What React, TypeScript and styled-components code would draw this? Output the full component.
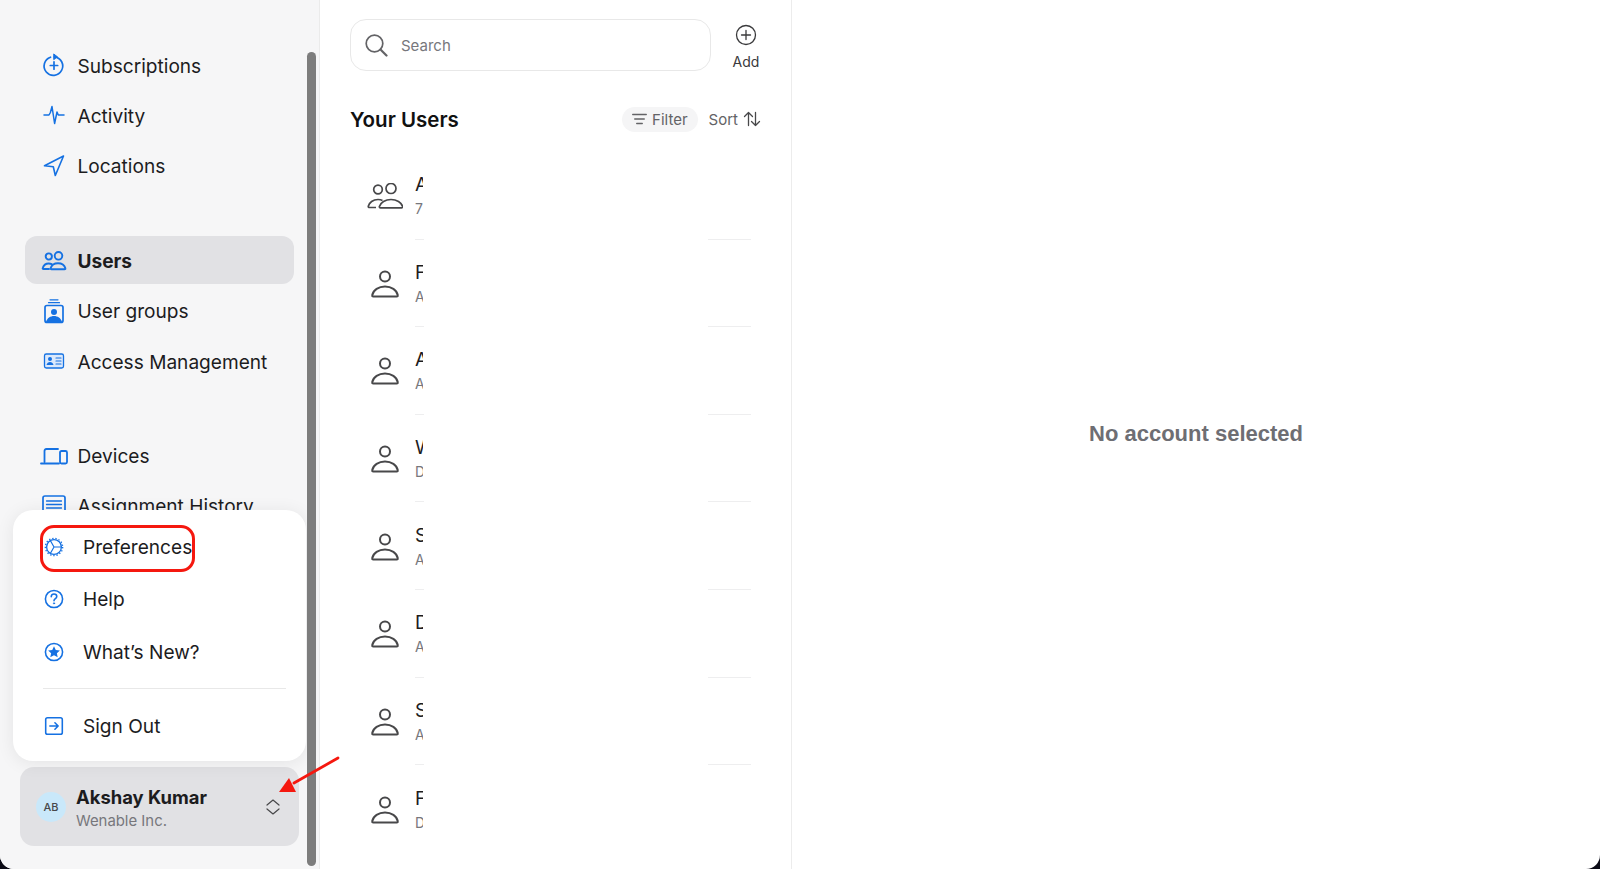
import React from 'react';
import styled, { createGlobalStyle } from 'styled-components';

const GlobalStyle = createGlobalStyle`
    html, body {
        margin: 0;
        padding: 0;
        background: #0b0b16;
    }
    body {
        font-family: Inter, "Noto Sans", sans-serif;
        -webkit-font-smoothing: antialiased;
    }
`

const Blue = ({ children }: { children: React.ReactNode }): JSX.Element => (
    <svg width="26" height="26" viewBox="0 0 26 26" fill="none" stroke="#1571e2" strokeWidth="1.7" strokeLinecap="round" strokeLinejoin="round">
        {children}
    </svg>
)

const SubscriptionsIcon = () => (
    <Blue>
        <path d="M9.5 5.2a9.3 9.3 0 1 0 4-.4" />
        <path d="M13 2.2l3.4 2.6-3.4 2.6z" fill="#1571e2" strokeWidth="1" />
        <path d="M13 9.8v7.4M9.3 13.5h7.4" />
    </Blue>
)
const ActivityIcon = () => (
    <Blue>
        <path d="M3 13h5l1.4-2.5L11 4.500l2.600 17 2.400-11.500 1.300 3H23" strokeWidth="1.5" />
    </Blue>
)
const LocationsIcon = () => (
    <Blue>
        <path d="M22.500 3L3.500 12.800l8.800 1 2 8.700z" strokeWidth="1.600" />
    </Blue>
)
const UsersIcon = () => (
    <Blue>
        <circle cx="7.800" cy="9.500" r="3.100" strokeWidth="1.900" />
        <circle cx="17.500" cy="8.800" r="3.800" strokeWidth="1.900" />
        <path d="M8 22H2.500c-.7 0-1-.5-.8-1 .8-2.500 3-4.500 6-4.500 1 0 2 .2 3 .7" strokeWidth="1.900" />
        <path d="M10.500 22.300c-.8 0-1.100-.5-.9-1.100.9-3 3.800-5 7.400-5s6.500 2 7.400 5c.2.600-.1 1.100-.9 1.100z" strokeWidth="1.900" />
    </Blue>
)
const UserGroupsIcon = () => (
    <Blue>
        <rect x="4" y="7.500" width="18" height="17" rx="2" />
        <path d="M7.500 4.700h11M9 1.800h8" strokeWidth="1.200" />
        <circle cx="13" cy="14" r="3" fill="#1571e2" stroke="none" />
        <path d="M5 24c1-4 4.500-6 8-6s7 2 8 6z" fill="#1571e2" stroke="none" />
    </Blue>
)
const AccessIcon = () => (
    <Blue>
        <rect x="3.500" y="6" width="19" height="14" rx="1.800" strokeWidth="1.300" fill="#dce9fb" />
        <circle cx="9" cy="11" r="2" fill="#1571e2" stroke="none" />
        <path d="M5.500 17c.4-2 2-3 3.500-3s3.100 1 3.500 3z" fill="#1571e2" stroke="none" />
        <path d="M15 10h5M15 13h5M15 16h5" strokeWidth="1.200" />
    </Blue>
)
const DevicesIcon = () => (
    <svg width="28" height="26" viewBox="0 0 28 26" fill="none" stroke="#1571e2" strokeWidth="1.800" strokeLinecap="round" strokeLinejoin="round">
        <path d="M18 6H6.500C5 6 4.500 7 4.500 8v11" />
        <path d="M1 20.500h18" />
        <rect x="20" y="8" width="7" height="12.500" rx="1.500" />
    </svg>
)
const HistoryIcon = () => (
    <Blue>
        <rect x="2" y="3" width="22" height="20" rx="2" />
        <path d="M5.500 8h15M5.500 11.500h15M5.500 15h15M5.500 18.500h10" strokeWidth="1.300" />
    </Blue>
)
const PreferencesIcon = () => (
    <Blue>
        <circle cx="13" cy="13" r="8" strokeWidth="1.400" />
        <circle cx="13" cy="13" r="9.400" strokeWidth="1.400" strokeDasharray="1.500 2" strokeLinecap="butt" />
        <path d="M9 6l4 7-4 7M13 13h8" strokeWidth="1.300" />
    </Blue>
)
const HelpIcon = () => (
    <Blue>
        <circle cx="13" cy="13" r="9.300" />
        <path d="M10 10.500c0-1.800 1.300-3 3-3s3 1.200 3 2.700c0 2.300-3 2.300-3 4.600" />
        <circle cx="13" cy="17.700" r=".7" fill="#1571e2" strokeWidth=".8" />
    </Blue>
)
const WhatsNewIcon = () => (
    <Blue>
        <circle cx="13" cy="13" r="9.300" />
        <path d="M13 6.700l1.900 4.100 4.500.5-3.300 3 .9 4.500-4-2.300-4 2.300.9-4.500-3.300-3 4.500-.5z" fill="#1571e2" stroke="none" />
    </Blue>
)
const SignOutIcon = () => (
    <Blue>
        <rect x="4" y="4" width="18" height="18" rx="2" />
        <path d="M8.500 13h9M14 9.500l3.500 3.500-3.500 3.500" />
    </Blue>
)
const SearchIcon = () => (
    <svg width="24" height="24" viewBox="0 0 24 24" fill="none" stroke="#636366" strokeWidth="1.700" strokeLinecap="round">
        <circle cx="10.500" cy="10.500" r="8.300" />
        <path d="M16.500 16.500l6 6" strokeWidth="2.200" />
    </svg>
)
const AddIcon = () => (
    <svg width="22" height="22" viewBox="0 0 22 22" fill="none" stroke="#3a3a3c" strokeWidth="1.300" strokeLinecap="round">
        <circle cx="11" cy="11" r="9.500" />
        <path d="M11 6.500v9M6.500 11h9" />
    </svg>
)
const FilterIcon = () => (
    <svg width="15" height="12" viewBox="0 0 15 12" fill="none" stroke="#636366" strokeWidth="1.300" strokeLinecap="round">
        <path d="M.7 1.500h13.600M2.700 6h9.600M4.700 10.500h5.600" />
    </svg>
)
const SortIcon = () => (
    <svg width="18" height="16" viewBox="0 0 18 16" fill="none" stroke="#48484a" strokeWidth="1.300" strokeLinecap="round" strokeLinejoin="round">
        <path d="M5.500 14.500V1.500M1.500 5.500l4-4 4 4" />
        <path d="M12.500 1.500v13M8.500 10.500l4 4 4-4" />
    </svg>
)
const PersonIcon = () => (
    <svg width="28" height="28" viewBox="0 0 28 28" fill="none" stroke="#48484a" strokeWidth="2" strokeLinejoin="round">
        <circle cx="14" cy="6.500" r="5" />
        <path d="M2.300 26.500c-.9 0-1.300-.5-1.100-1.300C2.300 20 7.600 16.500 14 16.500s11.700 3.500 12.800 8.700c.2.800-.2 1.300-1.100 1.300z" />
    </svg>
)
const PeopleIcon = () => (
    <svg width="36" height="26" viewBox="0 0 36 26" fill="none" stroke="#48484a" strokeWidth="1.700" strokeLinejoin="round">
        <circle cx="11" cy="6.500" r="4.300" />
        <circle cx="24" cy="5.500" r="5" />
        <path d="M9 24.500H2.500c-.9 0-1.400-.5-1.200-1.300.9-3.700 4.700-6.700 9.700-6.700 1.700 0 3.200.3 4.500 1" />
        <path d="M13.500 24.800c-.9 0-1.300-.6-1.100-1.300 1.100-4 6-7 11.600-7s10.500 3 11.600 7c.2.700-.2 1.300-1.100 1.300z" />
    </svg>
)
const ChevronsIcon = () => (
    <svg width="14" height="16" viewBox="0 0 14 16" fill="none" stroke="#48484a" strokeWidth="1.200" strokeLinecap="round" strokeLinejoin="round">
        <path d="M1 6l6-5 6 5M1 10l6 5 6-5" />
    </svg>
)

const navGroups = [
    [
        { label: 'Subscriptions', icon: <SubscriptionsIcon /> },
        { label: 'Activity', icon: <ActivityIcon /> },
        { label: 'Locations', icon: <LocationsIcon /> },
    ],
    [
        { label: 'Users', icon: <UsersIcon />, active: true },
        { label: 'User groups', icon: <UserGroupsIcon /> },
        { label: 'Access Management', icon: <AccessIcon /> },
    ],
    [
        { label: 'Devices', icon: <DevicesIcon /> },
        { label: 'Assignment History', icon: <HistoryIcon /> },
    ],
]

const users = [
    { name: 'A', sub: '7', group: true },
    { name: 'F', sub: 'A' },
    { name: 'A', sub: 'A' },
    { name: 'W', sub: 'D' },
    { name: 'S', sub: 'A' },
    { name: 'D', sub: 'A' },
    { name: 'S', sub: 'A' },
    { name: 'F', sub: 'D' },
]

const App = (): JSX.Element => {
    return (
        <Frame>
            <GlobalStyle />
            <Sidebar>
                <Nav>
                    {navGroups.map((group, i) => (
                        <NavGroup key={i}>
                            {group.map((item) => (
                                <NavItem key={item.label} $active={item.active}>
                                    <NavIcon>{item.icon}</NavIcon>
                                    <NavLabel>{item.label}</NavLabel>
                                </NavItem>
                            ))}
                        </NavGroup>
                    ))}
                </Nav>
                <AccountCard>
                    <Avatar>AB</Avatar>
                    <AccountText>
                        <AccountName>Akshay Kumar</AccountName>
                        <AccountOrg>Wenable Inc.</AccountOrg>
                    </AccountText>
                    <ChevronsIcon />
                </AccountCard>
                <Popup>
                    <RedBox />
                    <MenuItem><MenuIcon><PreferencesIcon /></MenuIcon>Preferences</MenuItem>
                    <MenuItem><MenuIcon><HelpIcon /></MenuIcon>Help</MenuItem>
                    <MenuItem><MenuIcon><WhatsNewIcon /></MenuIcon>What’s New?</MenuItem>
                    <MenuDivider />
                    <MenuItem><MenuIcon><SignOutIcon /></MenuIcon>Sign Out</MenuItem>
                </Popup>
                <ScrollThumb />
            </Sidebar>

            <ListPanel>
                <SearchRow>
                    <SearchBox>
                        <SearchIcon />
                        <SearchText>Search</SearchText>
                    </SearchBox>
                    <AddButton>
                        <AddIcon />
                        <span>Add</span>
                    </AddButton>
                </SearchRow>
                <ListHeader>
                    <ListTitle>Your Users</ListTitle>
                    <FilterPill><FilterIcon />Filter</FilterPill>
                    <SortButton>Sort<SortIcon /></SortButton>
                </ListHeader>
                <UserList>
                    {users.map((user, i) => (
                        <UserRow key={i}>
                            <UserBody>
                                <UserIconBox>{user.group ? <PeopleIcon /> : <PersonIcon />}</UserIconBox>
                                <UserClip>
                                    <UserName>{user.name}</UserName>
                                    <UserSub>{user.sub}</UserSub>
                                </UserClip>
                            </UserBody>
                            {i < users.length - 1 && (
                                <RowRule>
                                    <RuleSegment $width={9} />
                                    <RuleSegment $width={43} />
                                </RowRule>
                            )}
                        </UserRow>
                    ))}
                </UserList>
            </ListPanel>

            <DetailPanel>
                <EmptyText>No account selected</EmptyText>
            </DetailPanel>

            <RedArrow viewBox="0 0 70 50" width="70" height="50">
                <path d="M60 8L16 33" stroke="#f5180f" strokeWidth="2.800" strokeLinecap="round" />
                <path d="M1 42l10-14 7 14z" fill="#f5180f" />
            </RedArrow>
        </Frame>
    )
}

export default App

const Frame = styled.div`
    position: relative;
    display: flex;
    width: 1600px;
    height: 869px;
    overflow: hidden;
    background: #fff;
    border-radius: 0 0 14px 14px;
    color: #1c1c1e;
`

const Sidebar = styled.aside`
    position: relative;
    display: flex;
    flex-direction: column;
    flex: none;
    width: 319px;
    background: #f6f6f7;
    border-right: 1px solid #ebebeb;
`
const Nav = styled.nav`
    flex: 1;
    min-height: 0;
    overflow: hidden;
    display: flex;
    flex-direction: column;
    gap: 46.500px;
    padding: 41px 25px 0;
`
const NavGroup = styled.div`
    display: flex;
    flex-direction: column;
    gap: 2.400px;
`
const NavItem = styled.div<{ $active?: boolean }>`
    display: flex;
    align-items: center;
    flex: none;
    gap: 9.500px;
    width: 269px;
    height: 48px;
    box-sizing: border-box;
    padding-left: 15px;
    border-radius: 12px;
    font-size: 19.100px;
    font-weight: ${(p) => (p.$active ? 700 : 400)};
    background: ${(p) => (p.$active ? '#e1e1e4' : 'transparent')};
`
const NavIcon = styled.span`
    display: flex;
    align-items: center;
    justify-content: center;
    width: 28px;
`
const NavLabel = styled.span`
    padding-top: 1px;
`
const AccountCard = styled.div`
    display: flex;
    align-items: center;
    flex: none;
    width: 279px;
    height: 79px;
    box-sizing: border-box;
    margin: 0 0 23px 20px;
    padding: 0 19px 0 16px;
    border-radius: 14px;
    background: #e1e1e4;
`
const Avatar = styled.div`
    display: flex;
    align-items: center;
    justify-content: center;
    flex: none;
    width: 30px;
    height: 30px;
    border-radius: 50%;
    background: #c9e8fa;
    color: #48484a;
    font-size: 11px;
    font-weight: 500;
`
const AccountText = styled.div`
    flex: 1;
    display: flex;
    flex-direction: column;
    gap: 2px;
    margin: 3px 0 0 10px;
`
const AccountName = styled.div`
    font-size: 18.400px;
    line-height: 24px;
    font-weight: 700;
`
const AccountOrg = styled.div`
    font-size: 14.900px;
    line-height: 20px;
    color: #77777c;
`
const Popup = styled.div`
    position: absolute;
    left: 13px;
    bottom: 108px;
    width: 293px;
    height: 251px;
    box-sizing: border-box;
    padding: 11px 20px 0 29px;
    border-radius: 20px;
    background: #fff;
    box-shadow: 0 2px 18px rgba(0, 0, 0, 0.08);
`
const RedBox = styled.div`
    position: absolute;
    left: 27px;
    top: 15px;
    width: 155px;
    height: 47px;
    box-sizing: border-box;
    border: 3px solid #f5180f;
    border-radius: 14px;
`
const MenuItem = styled.div`
    display: flex;
    align-items: center;
    gap: 17px;
    height: 52.300px;
    font-size: 19.100px;
`
const MenuIcon = styled.span`
    display: flex;
    width: 24px;
    justify-content: center;
`
const MenuDivider = styled.div`
    height: 1px;
    margin: 10px 0 11px 1px;
    background: #e8e8e8;
`
const ScrollThumb = styled.div`
    position: absolute;
    left: 307px;
    top: 52px;
    bottom: 3px;
    width: 9px;
    border-radius: 5px;
    background: #7d7d7d;
`

const ListPanel = styled.section`
    flex: none;
    width: 472px;
    box-sizing: border-box;
    padding: 19px 20px 0 30px;
    border-right: 1px solid #ececec;
`
const SearchRow = styled.div`
    display: flex;
    align-items: flex-start;
`
const SearchBox = styled.div`
    display: flex;
    align-items: center;
    flex: none;
    gap: 13px;
    width: 361px;
    height: 52px;
    box-sizing: border-box;
    padding-left: 13px;
    border: 1px solid #e8e8e8;
    border-radius: 16px;
`
const SearchText = styled.span`
    font-size: 15px;
    color: #77777c;
`
const AddButton = styled.div`
    display: flex;
    flex-direction: column;
    align-items: center;
    flex: none;
    gap: 7px;
    width: 50px;
    margin: 5px 0 0 10px;
    font-size: 14px;
    color: #3a3a3c;
`
const ListHeader = styled.div`
    display: flex;
    align-items: center;
    height: 26px;
    margin: 35px 10px 0 0;
`
const ListTitle = styled.h2`
    flex: 1;
    margin: 0;
    font-size: 20.500px;
    font-weight: 600;
    color: #111;
`
const FilterPill = styled.div`
    display: flex;
    align-items: center;
    gap: 5px;
    height: 25px;
    padding: 0 10px 0 10px;
    border-radius: 13px;
    background: #f5f5f6;
    font-size: 15px;
    color: #636366;
`
const SortButton = styled.div`
    display: flex;
    align-items: center;
    gap: 5px;
    margin-left: 11px;
    font-size: 15px;
    color: #636366;
`
const UserList = styled.div`
    margin-top: 20px;
`
const UserRow = styled.div`
    display: flex;
    flex-direction: column;
    height: 87.600px;
`
const UserBody = styled.div`
    flex: 1;
    display: flex;
    align-items: center;
    padding: 2px 0 0 17px;
`
const UserIconBox = styled.div`
    display: flex;
    justify-content: center;
    width: 36px;
    margin-right: 12px;
`
const UserClip = styled.div`
    width: 8px;
    overflow: hidden;
    white-space: nowrap;
`
const UserName = styled.div`
    font-size: 19px;
    line-height: 26px;
`
const UserSub = styled.div`
    font-size: 14px;
    line-height: 22px;
    color: #77777c;
`
const RowRule = styled.div`
    display: flex;
    justify-content: space-between;
    flex: none;
    width: 336px;
    margin-left: 65px;
`
const RuleSegment = styled.div<{ $width: number }>`
    width: ${(p) => p.$width}px;
    height: 1px;
    background: #eeeeef;
`

const DetailPanel = styled.main`
    flex: 1;
    display: flex;
    align-items: center;
    justify-content: center;
    padding-bottom: 2px;
`
const EmptyText = styled.div`
    font-family: "Liberation Sans", Arial, sans-serif;
    font-size: 22px;
    font-weight: 700;
    color: #6e6e73;
`
const RedArrow = styled.svg`
    position: absolute;
    left: 278px;
    top: 750px;
`
